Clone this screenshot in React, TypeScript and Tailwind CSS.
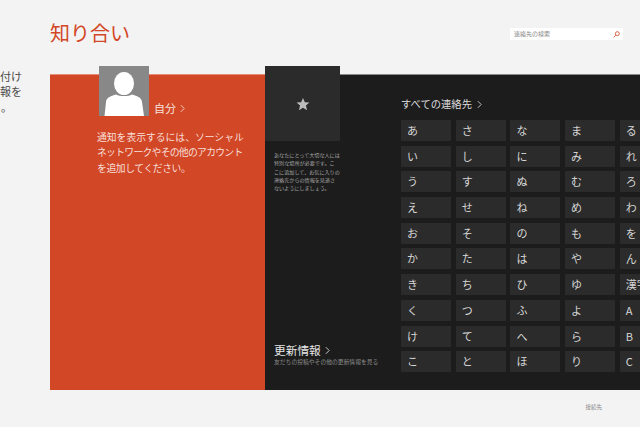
import React from 'react';

const kana = [
  'あ', 'い', 'う', 'え', 'お', 'か', 'き', 'く', 'け', 'こ',
  'さ', 'し', 'す', 'せ', 'そ', 'た', 'ち', 'つ', 'て', 'と',
  'な', 'に', 'ぬ', 'ね', 'の', 'は', 'ひ', 'ふ', 'へ', 'ほ',
  'ま', 'み', 'む', 'め', 'も', 'や', 'ゆ', 'よ', 'ら', 'り',
  'る', 'れ', 'ろ', 'わ', 'を', 'ん', '漢字', 'A', 'B', 'C',
];

const Chevron = ({ className }: { className: string }) => (
  <svg viewBox="0 0 6 10" fill="none" stroke="currentColor" strokeWidth="1" className={className}>
    <path d="M1 1l4 4-4 4" />
  </svg>
);

export default function App() {
  return (
    <div className="w-[640px] h-[427px] overflow-hidden flex flex-col bg-[#f3f3f3] font-['Noto_Sans_CJK_JP','Noto_Sans',sans-serif]">
      {/* Header */}
      <div className="h-[74px] flex-none flex items-start justify-between pl-[50px] pr-[17px]">
        <h1 className="mt-[18px] text-[20px] leading-[30px] font-normal text-[#d24726]">知り合い</h1>
        <div className="mt-[28px] w-[113px] h-[12px] bg-white flex items-center justify-between pl-[4px] pr-[3px]">
          <span className="text-[6px] leading-none text-[#888]">連絡先の検索</span>
          <svg viewBox="0 0 10 10" fill="none" stroke="#d24726" strokeWidth="1.2" className="w-[7px] h-[7px]">
            <circle cx="6.2" cy="3.8" r="2.8" />
            <path d="M4 6L1 9" />
          </svg>
        </div>
      </div>

      {/* Main */}
      <div className="h-[316px] flex-none flex">
        <div className="w-[50px] flex-none text-[11px] text-[#4a4a4a]">
          <div className="w-[22px] h-[16px] leading-[16px] flex justify-end overflow-hidden whitespace-nowrap -mt-[6px]">を付け</div>
          <div className="w-[22px] h-[15px] leading-[15px] flex justify-end overflow-hidden whitespace-nowrap">情報を</div>
          <div className="w-[22px] h-[16px] leading-[16px] overflow-hidden whitespace-nowrap pl-[1px]">。</div>
        </div>

        {/* Red panel */}
        <div className="w-[215px] flex-none bg-[#d24726] border-t border-[#e58d78]">
          <div className="flex items-end pl-[49px] -mt-[9px]">
            <div className="w-[50px] h-[50px] bg-[#888888] flex-none">
              <svg viewBox="0 0 50 50" className="w-[50px] h-[50px]">
                <ellipse cx="25" cy="17.5" rx="10" ry="11.5" fill="#fff" />
                <path d="M5.5 50L7 36C7.500 32 10 30.500 17 28.500C21 30.500 29 30.500 33 28.500C40 30.500 42.500 32 43 36L45 50Z" fill="#fff" />
              </svg>
            </div>
            <span className="ml-[5px] text-[11px] leading-[16px] text-[#f6e3dd]">自分</span>
            <Chevron className="ml-[4px] mb-[3px] w-[5px] h-[9px] text-[#f6e3dd]" />
          </div>
          <div className="mt-[14px] pl-[47px] text-[9.800px] leading-[15.300px] text-[#f8dfd8] whitespace-nowrap">
            <p>通知を表示するには、ソーシャル</p>
            <p className="tracking-[-0.700px]">ネットワークやその他のアカウント</p>
            <p className="tracking-[-0.400px]">を追加してください。</p>
          </div>
        </div>

        {/* Dark panel */}
        <div className="flex-1 min-w-0 bg-[#1c1c1c] flex border-t border-[#8a8a8a]">
          <div className="w-[75px] flex-none flex flex-col -mt-[9px]">
            <div className="h-[75px] bg-[#2b2b2b] flex items-center justify-center text-[#bdbdbd]">
              <svg viewBox="0 0 24 24" fill="currentColor" className="w-[14px] h-[14px]">
                <path d="M12 1.500l3.200 7.300 7.800.700-5.900 5.200 1.800 7.800L12 18.300l-6.900 4.200 1.800-7.800L1 9.500l7.800-.700z" />
              </svg>
            </div>
            <p className="mt-[10px] ml-[9px] text-[5.100px] leading-[8.300px] text-[#a6a6a6] whitespace-nowrap">
              あなたにとって大切な人には
              <br />
              特別な場所が必要です。こ
              <br />
              こに追加して、お気に入りの
              <br />
              連絡先からの情報を見逃さ
              <br />
              ないようにしましょう。
            </p>
            <div className="mt-auto mb-[24px] ml-[9px] whitespace-nowrap">
              <div className="flex items-center h-[16px]">
                <span className="text-[11.700px] leading-[16px] text-[#e6e6e6]">更新情報</span>
                <Chevron className="ml-[4px] w-[5px] h-[9px] text-[#e6e6e6]" />
              </div>
              <div className="text-[5.800px] leading-[8px] text-[#8c8c8c]">友だちの投稿やその他の更新情報を見る</div>
            </div>
          </div>

          <div className="ml-[61px] flex-none">
            <div className="h-[45px] pt-[21px] flex items-start">
              <span className="text-[10.300px] leading-[16px] text-[#dcdcdc] whitespace-nowrap">すべての連絡先</span>
              <Chevron className="ml-[5px] mt-[4px] w-[5px] h-[9px] text-[#dcdcdc]" />
            </div>
            <div className="grid grid-flow-col grid-rows-[repeat(10,21px)] auto-cols-[50px] gap-x-[4.700px] gap-y-[4.700px]">
              {kana.map((k) => (
                <div key={k} className="bg-[#2b2b2b] flex items-center pl-[6px] text-[11px] leading-none text-[#d6d6d6] whitespace-nowrap">
                  {k}
                </div>
              ))}
            </div>
          </div>
        </div>
      </div>

      {/* Footer */}
      <div className="flex-1 flex justify-end pr-[38px] pt-[13px]">
        <span className="text-[5.500px] leading-[8px] text-[#8a8a8a]">接続先</span>
      </div>
    </div>
  );
}
